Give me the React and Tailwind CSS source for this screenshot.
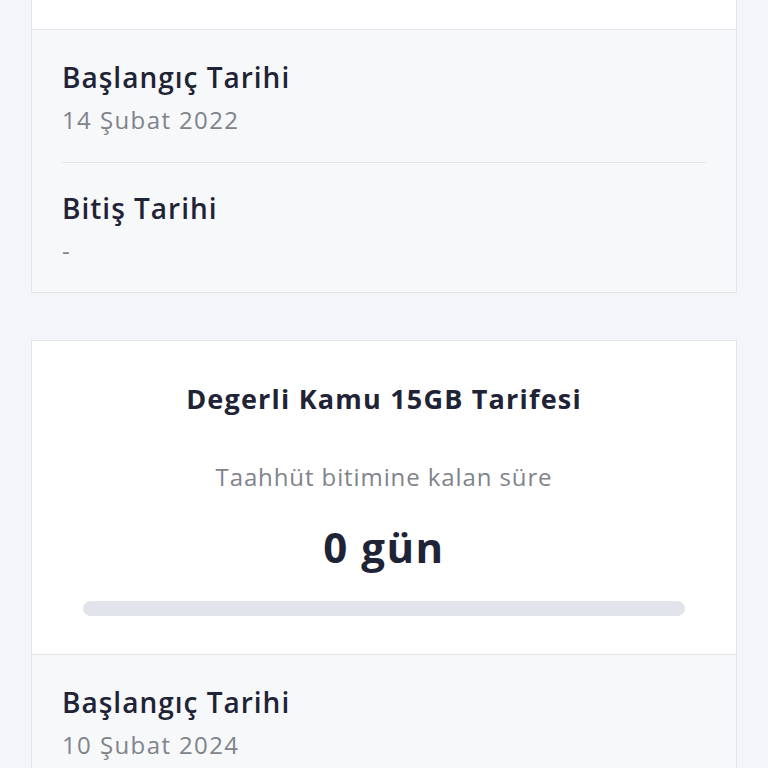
const font = { fontFamily: '"Open Sans", "Noto Sans", sans-serif' }

function DateRow({ label, value, divider }) {
  return (
    <div className={divider ? 'pb-[26px] border-b border-[#e3e5ea]' : ''}>
      <div className="text-[28px] leading-[36px] font-semibold tracking-[1px] text-[#1f2336]">{label}</div>
      <div className="mt-[9px] text-[24px] leading-[32px] tracking-[1.4px] text-[#80838b]">{value}</div>
    </div>
  )
}

function DatesSection({ rows }) {
  return (
    <div className="bg-[#f7f8fa] px-[30px] pt-[29px] pb-[25px] flex flex-col gap-[27px]">
      {rows.map((r, i) => (
        <DateRow key={r.label} label={r.label} value={r.value} divider={i < rows.length - 1} />
      ))}
    </div>
  )
}

export default function App() {
  return (
    <div className="min-h-screen bg-[#f4f5f8] px-[31px] pb-10" style={font}>
      <div className="border-x border-b border-[#e3e5ea] bg-white">
        <div className="h-[30px] bg-white border-b border-[#e3e5ea]" />
        <DatesSection
          rows={[
            { label: 'Başlangıç Tarihi', value: '14 Şubat 2022' },
            { label: 'Bitiş Tarihi', value: '-' },
          ]}
        />
      </div>

      <div className="mt-[47px] border border-[#e3e5ea] bg-white">
        <div className="flex flex-col items-center px-[51px] pt-[41px] pb-[38px] border-b border-[#e3e5ea]">
          <div className="text-[27px] leading-[34px] font-bold tracking-[1.2px] text-[#1f2336]">Degerli Kamu 15GB Tarifesi</div>
          <div className="mt-[45px] text-[24px] leading-[32px] tracking-[0.9px] text-[#80838b]">Taahhüt bitimine kalan süre</div>
          <div className="mt-[30px] text-[42px] leading-[48px] font-bold tracking-[1.5px] text-[#1f2336]">0 gün</div>
          <div className="mt-[30px] w-full h-[15px] rounded-full bg-[#e1e4eb]" />
        </div>
        <DatesSection
          rows={[
            { label: 'Başlangıç Tarihi', value: '10 Şubat 2024' },
            { label: 'Bitiş Tarihi', value: '-' },
          ]}
        />
      </div>
    </div>
  )
}
